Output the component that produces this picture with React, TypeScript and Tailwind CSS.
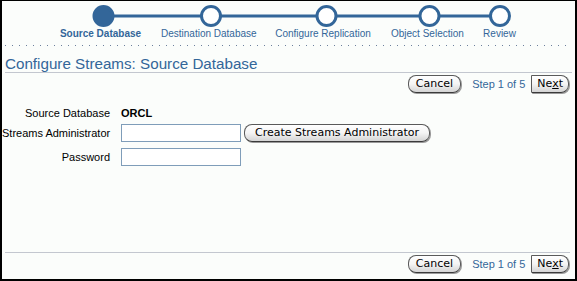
import React from "react";

const SANS = "font-['Liberation_Sans',Arial,sans-serif]";
const BTN = "font-['DejaVu_Sans',Verdana,sans-serif]";

function Btn({ children, className = "" }: { children: React.ReactNode; className?: string }) {
  return (
    <button
      className={`${BTN} h-[18px] text-[11px] leading-[16px] text-black border border-[#5a5a5a] border-b-[#3a3a3a] bg-gradient-to-b from-white via-[#f4f4f4] to-[#d4d4d4] shadow-[1px_1px_0_#9a9a9a] ${className}`}
    >
      {children}
    </button>
  );
}

function NavRow() {
  return (
    <div className={`${SANS} flex items-center justify-end pr-[6px] h-[18px]`}>
      <Btn className="rounded-[8px] px-[7px]">Cancel</Btn>
      <span className="ml-[11px] text-[11px] text-[#336699] leading-[14px]">Step 1 of 5</span>
      <Btn className="ml-[6px] rounded-l-[1px] rounded-r-[8px] px-[5px]">
        Ne<span className="underline">x</span>t
      </Btn>
    </div>
  );
}

export default function App() {
  const centers = [101.5, 209, 324.5, 427.5, 498];
  const labels: { t: string; w: number; bold?: boolean }[] = [
    { t: "Source Database", w: 121, bold: true },
    { t: "Destination Database", w: 94 },
    { t: "Configure Replication", w: 136 },
    { t: "Object Selection", w: 72 },
    { t: "Review", w: 73 },
  ];
  return (
    <div
      className={`${SANS} w-[577px] h-[281px] border-t border-l-2 border-r-2 border-b-2 border-black bg-[#fbfdfb] flex flex-col overflow-hidden`}
    >
      {/* train */}
      <svg width="573" height="27" className="block shrink-0">
        <line x1={centers[0]} y1="15" x2={centers[4]} y2="15" stroke="#336699" strokeWidth="3" />
        {centers.map((c, i) => (
          <circle
            key={i}
            cx={c}
            cy="15"
            r="9.5"
            fill={i === 0 ? "#336699" : "#ffffff"}
            stroke="#336699"
            strokeWidth="3"
          />
        ))}
      </svg>
      <div className="flex pl-[38px] h-[12px]">
        {labels.map((l) => (
          <div
            key={l.t}
            style={{ width: l.w }}
            className={`text-center whitespace-nowrap text-[10px] leading-[12px] text-[#336699] ${l.bold ? "font-bold" : ""}`}
          >
            {l.t}
          </div>
        ))}
      </div>
      <div className="mt-[5px] ml-[3px] mr-[5px] h-px bg-[linear-gradient(to_right,#6b7f9c_1px,transparent_1px)] bg-[length:7px_1px]" />

      {/* title */}
      <div className="mt-[9px] mx-[3px] pr-[2px] border-b border-[#c3c7cf]">
        <h1 className="text-[15.2px] leading-[17px] text-[#336699] font-normal">
          Configure Streams: Source Database
        </h1>
      </div>

      <div className="mt-[2px]">
        <NavRow />
      </div>

      {/* form */}
      <div className="mt-[12px] grid grid-cols-[108px_auto] gap-x-[11px] items-center text-[11px] text-black">
        <div className="text-right h-[16px] leading-[16px] whitespace-nowrap">Source Database</div>
        <div className="font-bold h-[16px] leading-[16px]">ORCL</div>

        <div className="text-right mt-[3px] whitespace-nowrap">Streams Administrator</div>
        <div className="mt-[3px] flex items-center">
          <input className="w-[120px] h-[18px] border border-[#7f9db9] bg-white outline-none" />
          <Btn className="ml-[3px] rounded-[8px] px-[10px]">Create Streams Administrator</Btn>
        </div>

        <div className="text-right mt-[6px]">Password</div>
        <div className="mt-[6px]">
          <input type="password" className="block w-[120px] h-[18px] border border-[#7f9db9] bg-white outline-none" />
        </div>
      </div>

      <div className="flex-1" />
      <div className="mx-[3px] mr-[5px] border-b border-[#c3c7cf]" />
      <div className="mt-[2px] mb-[6px]">
        <NavRow />
      </div>
    </div>
  );
}
